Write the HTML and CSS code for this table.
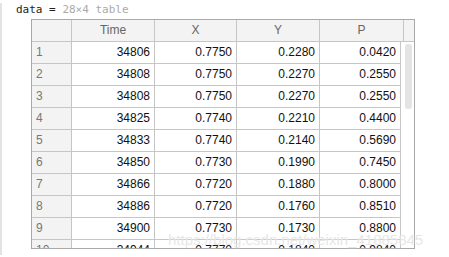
FILE: index.html
```html
<!DOCTYPE html>
<html lang="en">
<head>
  <meta charset="UTF-8">
  <title>data = 28×4 table</title>
  <link rel="stylesheet" href="styles.css">
</head>
<body>
  <div class="output">
    <div class="var-line"><span class="var-name">data</span> = <span class="var-info">28×4 table</span></div>
    <div class="grid">
      <div class="grid-head">
        <div class="cell idx"></div>
        <div class="cell">Time</div>
        <div class="cell">X</div>
        <div class="cell">Y</div>
        <div class="cell last">P</div>
        <div class="corner"></div>
      </div>
      <div class="grid-body">
        <div class="rows">
          <div class="row"><div class="cell idx">1</div><div class="cell">34806</div><div class="cell">0.7750</div><div class="cell">0.2280</div><div class="cell">0.0420</div></div>
          <div class="row"><div class="cell idx">2</div><div class="cell">34808</div><div class="cell">0.7750</div><div class="cell">0.2270</div><div class="cell">0.2550</div></div>
          <div class="row"><div class="cell idx">3</div><div class="cell">34808</div><div class="cell">0.7750</div><div class="cell">0.2270</div><div class="cell">0.2550</div></div>
          <div class="row"><div class="cell idx">4</div><div class="cell">34825</div><div class="cell">0.7740</div><div class="cell">0.2210</div><div class="cell">0.4400</div></div>
          <div class="row"><div class="cell idx">5</div><div class="cell">34833</div><div class="cell">0.7740</div><div class="cell">0.2140</div><div class="cell">0.5690</div></div>
          <div class="row"><div class="cell idx">6</div><div class="cell">34850</div><div class="cell">0.7730</div><div class="cell">0.1990</div><div class="cell">0.7450</div></div>
          <div class="row"><div class="cell idx">7</div><div class="cell">34866</div><div class="cell">0.7720</div><div class="cell">0.1880</div><div class="cell">0.8000</div></div>
          <div class="row"><div class="cell idx">8</div><div class="cell">34886</div><div class="cell">0.7720</div><div class="cell">0.1760</div><div class="cell">0.8510</div></div>
          <div class="row"><div class="cell idx">9</div><div class="cell">34900</div><div class="cell">0.7730</div><div class="cell">0.1730</div><div class="cell">0.8800</div></div>
          <div class="row"><div class="cell idx">10</div><div class="cell">34944</div><div class="cell">0.7770</div><div class="cell">0.1840</div><div class="cell">0.9840</div></div>
        </div>
        <div class="scroll-track"><div class="scroll-thumb"></div></div>
      </div>
    </div>
  </div>
  <div class="watermark">https://blog.csdn.net/weixin_41885845</div>
</body>
</html>
```

FILE: styles.css
```css
html, body {
  margin: 0;
  padding: 0;
  background: #fff;
}
.output {
  margin-top: 3px;
  height: 252px;
  border-left: 2px solid #e3e3e3;
  padding-left: 14px;
  box-sizing: border-box;
}
.var-line {
  font-family: 'DejaVu Sans Mono', 'Liberation Mono', monospace;
  font-size: 11px;
  line-height: 13px;
  color: #222;
  white-space: pre;
}
.var-info {
  color: #aaa;
}
.grid {
  margin: 3px 0 0 15px;
  width: 384px;
  height: 230px;
  border: 1px solid #a9a9a9;
  box-sizing: border-box;
  overflow: hidden;
  font-family: 'Liberation Sans', Arial, sans-serif;
  font-size: 12px;
}
.grid-head {
  display: flex;
  background: #f3f3f3;
}
.grid-head .cell {
  text-align: center;
  padding: 0;
  color: #666;
}
.cell {
  box-sizing: border-box;
  height: 22px;
  line-height: 21px;
  border-right: 1px solid #c6c6c6;
  border-bottom: 1px solid #c6c6c6;
  text-align: right;
  padding-right: 4px;
  color: #111;
  white-space: nowrap;
}
.cell:nth-child(1) { width: 40px; }
.cell:nth-child(2) { width: 83px; }
.cell:nth-child(3) { width: 82px; }
.cell:nth-child(4) { width: 83px; }
.cell:nth-child(5) { width: 81px; }
.grid-head .cell.last { width: 84px; }
.corner {
  flex: 1;
  height: 22px;
  box-sizing: border-box;
  border-bottom: 1px solid #c6c6c6;
}
.cell.idx {
  background: #f3f3f3;
  text-align: left;
  padding: 0 0 0 4px;
  color: #777;
}
.grid-body {
  display: flex;
}
.row {
  display: flex;
}
.scroll-track {
  flex: 1;
  padding: 2px 1px 0 4px;
}
.scroll-thumb {
  width: 7px;
  height: 65px;
  border-radius: 3px;
  background: #e4e4e4;
}
/* blog watermark over the bottom rows */
.watermark {
  position: absolute;
  left: 168px;
  top: 231px;
  font-family: 'Liberation Sans', Arial, sans-serif;
  font-size: 15px;
  color: rgba(205, 205, 205, 0.5);
  text-shadow: 0 0 1px #fff;
  white-space: nowrap;
}
```
